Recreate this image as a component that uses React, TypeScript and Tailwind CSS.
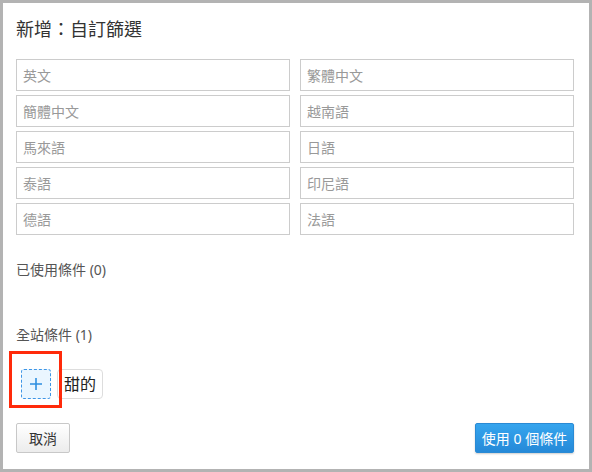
import React from "react";

const font = { fontFamily: '"Noto Sans", "Noto Sans CJK TC", "Liberation Sans", sans-serif' };

const left = ["英文", "簡體中文", "馬來語", "泰語", "德語"];
const right = ["繁體中文", "越南語", "日語", "印尼語", "法語"];

export default function App() {
  const rows = left.map((l, i) => [l, right[i]]);
  return (
    <div className="w-[592px] h-[472px] bg-[#b3b3b3] p-[3px]" style={font}>
      <div className="w-full h-full bg-white flex flex-col pl-[13px] pr-[15px]">
        <div className="h-[56px] pt-[12px] leading-[28px] text-[18px] text-[#333]">新增：自訂篩選</div>
        <div className="grid grid-cols-2 gap-x-[10px] gap-y-[4px]">
          {rows.flat().map((t) => (
            <div
              key={t}
              className="h-[32px] border border-[#cccccc] flex items-center pl-[6px] text-[14px] text-[#999]"
            >
              {t}
            </div>
          ))}
        </div>
        <div className="mt-[24px] text-[14px] text-[#555] h-[20px] flex items-center">已使用條件 (0)</div>
        <div className="mt-[45px] text-[14px] text-[#555] h-[20px] flex items-center">全站條件 (1)</div>
        <div className="mt-[25px] flex items-center gap-[6px] pl-[5px]">
          <div className="relative">
            <div className="absolute left-[-12px] top-[-18px] w-[53px] h-[57px] border-[3px] border-[#ff2a0a]" />
            <div className="w-[30px] h-[30px] rounded-[3px] border border-dashed border-[#3d95e6] bg-[#eaf6ff] flex items-center justify-center">
              <svg width="14" height="14" viewBox="0 0 14 14">
                <path d="M7 1v12M1 7h12" stroke="#2f8fe0" strokeWidth="1.6" />
              </svg>
            </div>
          </div>
          <div className="h-[30px] px-[6px] rounded-[4px] border border-[#dddddd] flex items-center text-[16px] text-[#222]">甜的</div>
        </div>
        <div className="mt-[24px] flex justify-between">
          <button className="w-[54px] h-[30px] rounded-[2px] border border-[#c8c8c8] bg-gradient-to-b from-[#ffffff] to-[#ececec] text-[14px] text-[#333] flex items-center justify-center">
            取消
          </button>
          <button className="w-[99px] h-[30px] rounded-[2px] border border-[#2a8ad4] bg-gradient-to-b from-[#36a5ee] to-[#2589d8] text-[14px] text-white flex items-center justify-center shadow-[0_1px_2px_rgba(0,0,0,0.2)]">
            使用 0 個條件
          </button>
        </div>
      </div>
    </div>
  );
}
